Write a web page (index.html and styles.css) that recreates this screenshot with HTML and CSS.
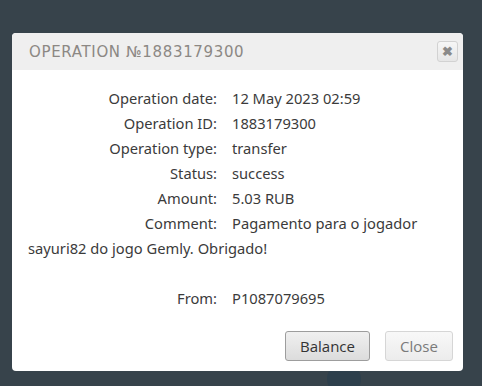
FILE: index.html
```html
<!DOCTYPE html>
<html lang="en">

<head>
    <meta charset="UTF-8">
    <meta name="viewport" content="width=device-width, initial-scale=1.0">
    <title>Operation</title>
    <link rel="stylesheet" href="styles.css">
</head>

<body>

    <div class="shade-dot"></div>

    <div class="dialog">
        <div class="dialog-header">
            <h2 class="dialog-title">Operation №1883179300</h2>
            <button class="dialog-x" title="Close">&#10006;</button>
        </div>

        <div class="dialog-body">
            <div class="row"><span class="label">Operation date:</span><span class="value">12 May 2023 02:59</span></div>
            <div class="row"><span class="label">Operation ID:</span><span class="value">1883179300</span></div>
            <div class="row"><span class="label">Operation type:</span><span class="value">transfer</span></div>
            <div class="row"><span class="label">Status:</span><span class="value">success</span></div>
            <div class="row"><span class="label">Amount:</span><span class="value">5.03 RUB</span></div>
            <div class="row"><span class="label">Comment:</span><span class="value">Pagamento para o jogador</span><br><span class="value">sayuri82 do jogo Gemly. Obrigado!</span><br><br></div>
            <div class="row"><span class="label">From:</span><span class="value">P1087079695</span></div>
        </div>

        <div class="dialog-buttons">
            <button class="btn btn-balance">Balance</button>
            <button class="btn btn-muted">Close</button>
        </div>
    </div>

</body>

</html>
```

FILE: styles.css
```css
body {
    margin: 0;
    height: 386px;
    overflow: hidden;
    background-color: #37434b;
    font-family: "Noto Sans", sans-serif;
    position: relative;
}

/* dark spot of the page behind the dialog */
.shade-dot {
    position: absolute;
    left: 327px;
    top: 362px;
    width: 34px;
    height: 34px;
    border-radius: 50%;
    background-color: #2d3f4c;
}

.dialog {
    position: relative; /* keep above the page spot */
    width: 451px;
    margin: 33px 0 0 12px;
    background-color: #fff;
    border-radius: 4px;
    overflow: hidden;
}

.dialog-header {
    height: 37px;
    background-color: #efefef;
    display: flex;
    align-items: center;
    justify-content: space-between;
    padding: 0 5px 0 17px;
}

.dialog-title {
    margin: 0;
    font-family: "DejaVu Sans", sans-serif;
    font-weight: normal;
    font-size: 15px;
    text-transform: uppercase;
    letter-spacing: 0.65px;
    color: #8c8884;
}

.dialog-x {
    width: 21px;
    height: 21px;
    padding: 0;
    border: 1px solid #d2d2d2;
    border-radius: 3px;
    background: linear-gradient(#f6f6f6, #e6e6e6);
    color: #8a8a8a;
    font-size: 13px;
    font-weight: bold;
    line-height: 19px;
    cursor: pointer;
}

.dialog-body {
    padding: 16px 16px 0 16px;
    font-size: 14.7px;
    line-height: 25px;
    color: #3b3b3b;
}

.label {
    display: inline-block;
    width: 189px;
    margin-right: 15px;
    text-align: right;
}

.dialog-buttons {
    display: flex;
    justify-content: flex-end;
    gap: 15px;
    padding: 20px 10px 10px 0;
}

.btn {
    height: 30px;
    padding: 0;
    font-family: "Open Sans", sans-serif;
    font-size: 15px;
    color: #333;
    background: linear-gradient(#f0f0f0, #dcdcdc);
    border: 1px solid #9d9d9d;
    border-radius: 3px;
    cursor: pointer;
}

.btn-balance {
    width: 85px;
}

.btn-muted {
    width: 68px;
    color: #7a7a7a;
    background: linear-gradient(#f8f8f8, #ececec);
    border-color: #d6d6d6;
}
```
